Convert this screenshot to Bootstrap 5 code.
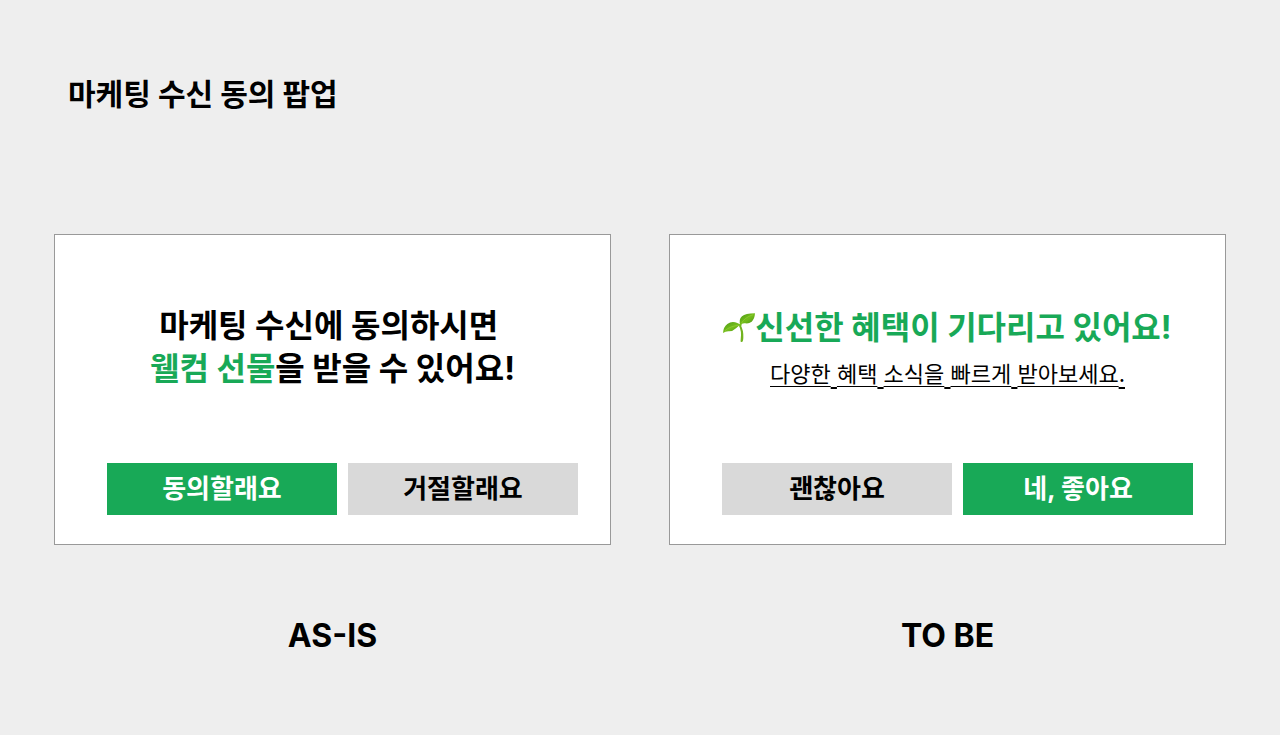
<!DOCTYPE html>
<html lang="ko">
<head>
<meta charset="utf-8">
<meta name="viewport" content="width=device-width, initial-scale=1">
<title>마케팅 수신 동의 팝업</title>
<link href="https://cdn.jsdelivr.net/npm/bootstrap@5.3.0/dist/css/bootstrap.min.css" rel="stylesheet">
<style>
body{background:#eee;color:#000;font-family:Inter,"Noto Sans CJK KR",sans-serif}
.page{padding:72px 54px}
.page-title{font-size:30px;line-height:44px;font-weight:700;margin:0 14px 118px}
.compare{--bs-gutter-x:58px;row-gap:48px}
.popup{background:#fff;border:1px solid #999;border-radius:0;min-height:311px;padding:69px 0 29px;color:#000}
.popup-invite{padding-top:71px}
.popup-title{font-size:32px;line-height:43px;font-weight:700;margin:0}
.brand-text{color:#18a957}
.popup-note{font-size:22px;line-height:32px;margin:9px 0 0}
.popup-note u{text-decoration-thickness:1px;text-underline-offset:4px}
.popup-note .word-gap{text-decoration-thickness:2px;text-underline-offset:5px}
.choices{gap:11px;margin:0 32px 0 52px}
.choice{border:0;border-radius:0;padding:0;font-size:26px;line-height:52px;font-weight:700;color:#000;background:#d9d9d9}
.choice:hover{color:#000;background:#ccc}
.choice-main,.choice-main:hover{background:#18a957;color:#fff}
.sprout{width:32px;height:30px}
.caption{font-size:32px;line-height:40px;font-weight:700;margin-top:71px}
</style>
</head>
<body>
<main class="page container-fluid">
<h1 class="page-title">마케팅 수신 동의 팝업</h1>
<div class="row compare">
<figure class="col-md-6 m-0">
<section class="popup card text-center">
<h2 class="popup-title">마케팅 수신에 동의하시면&nbsp;<br><span class="brand-text">웰컴 선물</span>을 받을 수 있어요!</h2>
<div class="choices d-flex mt-auto">
<button type="button" class="choice choice-main btn w-50">동의할래요</button>
<button type="button" class="choice btn w-50">거절할래요</button>
</div>
</section>
<figcaption class="caption text-center">AS-IS</figcaption>
</figure>
<figure class="col-md-6 m-0">
<section class="popup popup-invite card text-center">
<h2 class="popup-title brand-text d-flex justify-content-center align-items-center"><svg class="sprout flex-shrink-0" viewBox="0 0 96 90" aria-hidden="true">
<defs>
<linearGradient id="leaf" x1="0" y1="0" x2="1" y2="1"><stop offset="0" stop-color="#4c9a14"/><stop offset=".5" stop-color="#74bd1c"/><stop offset="1" stop-color="#3f8a12"/></linearGradient>
</defs>
<path d="M52 34 Q62 52 61 73 Q61 85 57 87 Q51 89 53 80 Q57 54 47 37Z" fill="#72b31f"/>
<path d="M0 60 Q1 42 13 33 Q27 22 43 30 L57 37 Q46 37 39 46 Q29 56 16 55 Q7 55 0 60Z" fill="url(#leaf)"/>
<path d="M52 37 Q46 20 57 10 Q67 1 96 1 Q95 18 86 26 Q77 33 67 31 Q56 29 54 38Z" fill="url(#leaf)"/>
<path d="M5 54 Q22 38 50 37 M55 31 Q64 14 90 5" fill="none" stroke="#97d235" stroke-width="2"/>
</svg><span>신선한 혜택이 기다리고 있어요!</span></h2>
<p class="popup-note"><u>다양한</u><u class="word-gap"> </u><u>혜택</u><u class="word-gap"> </u><u>소식을</u><u class="word-gap"> </u><u>빠르게</u><u class="word-gap"> </u><u>받아보세요</u><u class="word-gap">.</u></p>
<div class="choices d-flex mt-auto">
<button type="button" class="choice btn w-50">괜찮아요</button>
<button type="button" class="choice choice-main btn w-50">네, 좋아요</button>
</div>
</section>
<figcaption class="caption text-center">TO BE</figcaption>
</figure>
</div>
</main>
<script src="https://cdn.jsdelivr.net/npm/bootstrap@5.3.0/dist/js/bootstrap.bundle.min.js"></script>
</body>
</html>
